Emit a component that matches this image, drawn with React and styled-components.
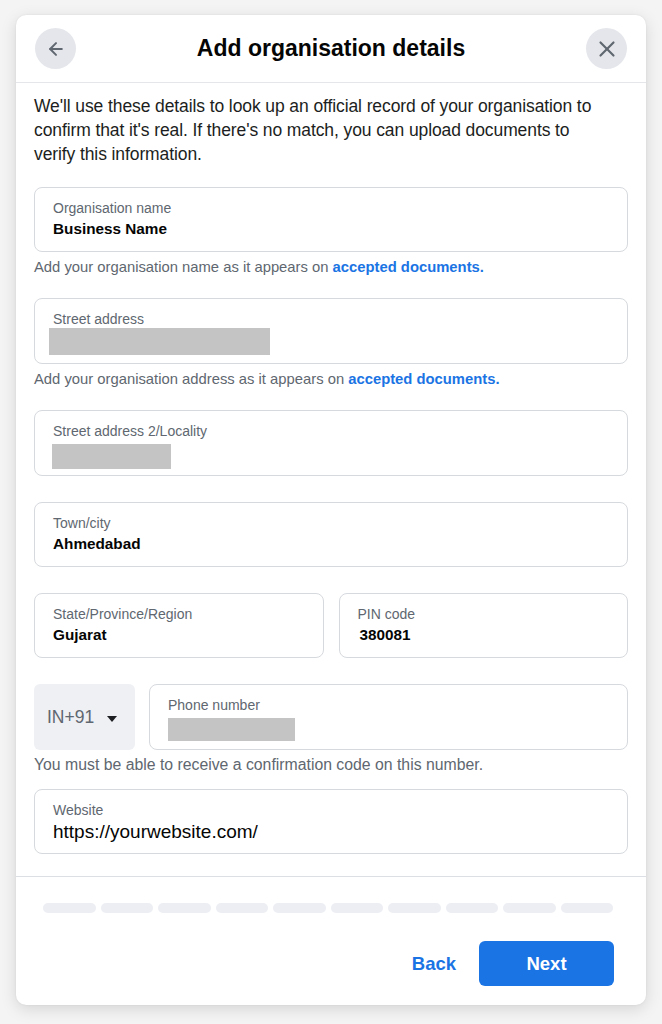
import React from "react";
import styled, { createGlobalStyle } from "styled-components";
import { ArrowLeft, X } from "lucide-react";

const GlobalStyle = createGlobalStyle`
  html, body { margin: 0; padding: 0; }
  body {
    background: #f3f3f3;
    font-family: "Liberation Sans", Arial, sans-serif;
    -webkit-font-smoothing: antialiased;
  }
  * { box-sizing: border-box; }
`;

const Page = styled.div`
  position: relative;
  width: 662px;
  height: 1024px;
  overflow: hidden;
  background: #f4f4f4;
`;

const Modal = styled.div`
  position: absolute;
  left: 16px;
  top: 15px;
  width: 630px;
  background: #fff;
  border-radius: 10px;
  box-shadow: 0 4px 16px rgba(0, 0, 0, 0.13), 0 0 2px rgba(0, 0, 0, 0.08);
  display: flex;
  flex-direction: column;
`;

const Header = styled.div`
  height: 68px;
  display: flex;
  align-items: center;
  justify-content: space-between;
  padding: 0 19px;
  border-bottom: 1px solid #e4e6e9;
`;

const IconButton = styled.button`
  width: 41px;
  height: 41px;
  border-radius: 50%;
  border: none;
  background: #e4e6eb;
  display: flex;
  align-items: center;
  justify-content: center;
  color: #606770;
  padding: 0;
`;

const Title = styled.h1`
  margin: 0;
  font-size: 23px;
  font-weight: 700;
  color: #050505;
`;

const Body = styled.div`
  padding: 11px 18px 22px 18px;
  display: flex;
  flex-direction: column;
  border-bottom: 1px solid #dcdfe3;
`;

const Intro = styled.p`
  margin: 0 0 21px 0;
  max-width: 570px;
  font-size: 17.5px;
  line-height: 24px;
  color: #1c1e21;
  letter-spacing: -0.1px;
`;

const Group = styled.div`
  display: flex;
  flex-direction: column;
  margin-bottom: ${(p) => p.$mb ?? 26}px;
`;

const Field = styled.div`
  flex: none;
  height: ${(p) => p.$h ?? 65}px;
  border: 1px solid #d6d9dd;
  border-radius: 8px;
  padding: 12px 18px 0 18px;
  display: flex;
  flex-direction: column;
`;

const Row = styled.div`
  display: flex;
  gap: ${(p) => p.$gap ?? 15}px;
  & > ${Field} {
    flex: 1 1 0;
    min-width: 0;
  }
`;

const Label = styled.div`
  font-size: 14px;
  line-height: 17px;
  color: #606770;
`;

const Value = styled.div`
  margin-top: ${(p) => (p.$regular ? 2 : 1)}px;
  font-size: ${(p) => (p.$regular ? 19 : 15.3)}px;
  line-height: 21px;
  font-weight: ${(p) => (p.$regular ? 400 : 700)};
  color: #050505;
  margin-left: ${(p) => p.$ml ?? 0}px;
`;

const Redacted = styled.div`
  margin-top: ${(p) => p.$mt ?? 4}px;
  margin-left: ${(p) => p.$ml ?? 0}px;
  width: ${(p) => p.$w}px;
  height: ${(p) => p.$h ?? 27}px;
  background: #c4c4c4;
`;

const Helper = styled.div`
  margin-top: 6px;
  font-size: ${(p) => p.$size ?? 14.8}px;
  line-height: 18px;
  color: #606770;
`;

const Link = styled.a`
  color: #1b74e4;
  font-weight: 700;
  text-decoration: none;
`;

const Country = styled.div`
  flex: none;
  width: 101px;
  height: 66px;
  border-radius: 6px;
  background: #eef0f4;
  display: flex;
  align-items: center;
  padding-left: 13px;
  color: #606770;
  font-size: 17.5px;
`;

const Caret = styled.span`
  width: 0;
  height: 0;
  margin-left: 13px;
  border-left: 5px solid transparent;
  border-right: 5px solid transparent;
  border-top: 6px solid #1c1e21;
  margin-top: 3px;
`;

const Footer = styled.div`
  padding: 26px 32px 19px 27px;
  display: flex;
  flex-direction: column;
  gap: 28px;
`;

const Progress = styled.div`
  display: flex;
  gap: 5px;
  padding-right: 1px;
`;

const Segment = styled.div`
  flex: 1;
  height: 10px;
  border-radius: 5px;
  background: #eceef3;
`;

const Actions = styled.div`
  display: flex;
  justify-content: flex-end;
  align-items: center;
  gap: 11px;
`;

const TextButton = styled.button`
  border: none;
  background: none;
  color: #1b74e4;
  font-family: inherit;
  font-size: 18.5px;
  font-weight: 700;
  padding: 0 12px;
  height: 45px;
`;

const PrimaryButton = styled.button`
  border: none;
  background: #1b74e4;
  color: #fff;
  font-family: inherit;
  font-size: 18.5px;
  font-weight: 700;
  width: 135px;
  height: 45px;
  border-radius: 6px;
`;

export default function App() {
  return (
    <>
      <GlobalStyle />
      <Page>
        <Modal>
          <Header>
            <IconButton aria-label="Back">
              <ArrowLeft size={20} strokeWidth={2.4} />
            </IconButton>
            <Title>Add organisation details</Title>
            <IconButton aria-label="Close">
              <X size={26} strokeWidth={2} />
            </IconButton>
          </Header>
          <Body>
            <Intro>
              We'll use these details to look up an official record of your organisation to
              confirm that it's real. If there's no match, you can upload documents to
              verify this information.
            </Intro>

            <Group $mb={22}>
              <Field>
                <Label>Organisation name</Label>
                <Value>Business Name</Value>
              </Field>
              <Helper>
                Add your organisation name as it appears on <Link>accepted documents.</Link>
              </Helper>
            </Group>

            <Group $mb={22}>
              <Field $h={66}>
                <Label>Street address</Label>
                <Redacted $w={221} $ml={-4} $mt={0} />
              </Field>
              <Helper>
                Add your organisation address as it appears on <Link>accepted documents.</Link>
              </Helper>
            </Group>

            <Group>
              <Field $h={66}>
                <Label>Street address 2/Locality</Label>
                <Redacted $w={119} $h={25} $ml={-1} />
              </Field>
            </Group>

            <Group>
              <Field>
                <Label>Town/city</Label>
                <Value>Ahmedabad</Value>
              </Field>
            </Group>

            <Group>
              <Row>
                <Field>
                  <Label>State/Province/Region</Label>
                  <Value>Gujarat</Value>
                </Field>
                <Field>
                  <Label>PIN code</Label>
                  <Value $ml={2}>380081</Value>
                </Field>
              </Row>
            </Group>

            <Group $mb={15}>
              <Row $gap={14}>
                <Country>
                  IN+91
                  <Caret />
                </Country>
                <Field $h={66}>
                  <Label>Phone number</Label>
                  <Redacted $w={127} $h={23} />
                </Field>
              </Row>
              <Helper $size={15.8}>
                You must be able to receive a confirmation code on this number.
              </Helper>
            </Group>

            <Group $mb={0}>
              <Field>
                <Label>Website</Label>
                <Value $regular>https://yourwebsite.com/</Value>
              </Field>
            </Group>
          </Body>
          <Footer>
            <Progress>
              {Array.from({ length: 10 }).map((_, i) => (
                <Segment key={i} />
              ))}
            </Progress>
            <Actions>
              <TextButton>Back</TextButton>
              <PrimaryButton>Next</PrimaryButton>
            </Actions>
          </Footer>
        </Modal>
      </Page>
    </>
  );
}
